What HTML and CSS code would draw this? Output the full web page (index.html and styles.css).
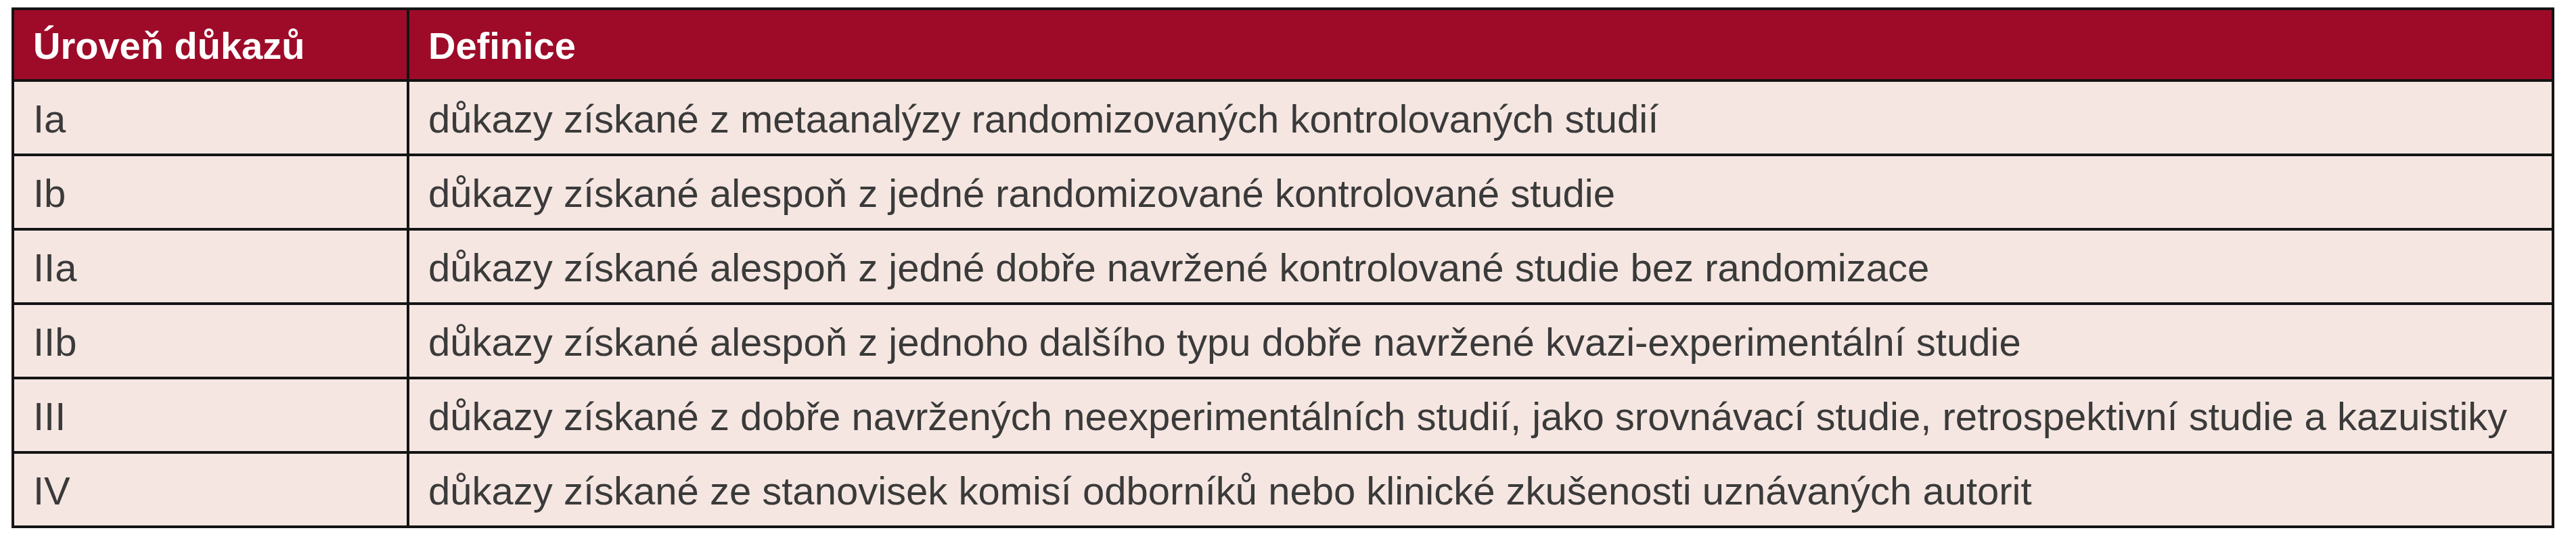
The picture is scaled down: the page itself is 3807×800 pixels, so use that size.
FILE: index.html
```html
<!DOCTYPE html>
<html lang="cs">
<head>
<meta charset="utf-8">
<title>Úroveň důkazů</title>
<link rel="stylesheet" href="styles.css">
</head>
<body>
<table class="evidence">
  <colgroup>
    <col class="col-level">
    <col class="col-def">
  </colgroup>
  <thead>
    <tr><th>Úroveň důkazů</th><th>Definice</th></tr>
  </thead>
  <tbody>
    <tr><td>Ia</td><td>důkazy získané z metaanalýzy randomizovaných kontrolovaných studií</td></tr>
    <tr><td>Ib</td><td>důkazy získané alespoň z jedné randomizované kontrolované studie</td></tr>
    <tr><td>IIa</td><td>důkazy získané alespoň z jedné dobře navržené kontrolované studie bez randomizace</td></tr>
    <tr><td>IIb</td><td>důkazy získané alespoň z jednoho dalšího typu dobře navržené kvazi-experimentální studie</td></tr>
    <tr><td>III</td><td>důkazy získané z dobře navržených neexperimentálních studií, jako srovnávací studie, retrospektivní studie a kazuistiky</td></tr>
    <tr><td>IV</td><td>důkazy získané ze stanovisek komisí odborníků nebo klinické zkušenosti uznávaných autorit</td></tr>
  </tbody>
</table>
</body>
</html>
```

FILE: styles.css
```css
html, body {
  background: #ffffff;
}
body {
  margin: 0;
  padding: 11px 0 0 17px;
  font-family: "Liberation Sans", Arial, sans-serif;
}
.evidence {
  border-collapse: collapse;
  table-layout: fixed;
  width: 3758px;
}
.col-level {
  width: 584px;
}
.evidence th,
.evidence td {
  border: 4px solid #141414;
  text-align: left;
  vertical-align: middle;
  padding: 4px 0 0 28px;
  font-size: 58px;
  line-height: 1.15;
  white-space: nowrap;
}
.evidence th {
  background: #9d0b28;
  color: #ffffff;
  font-weight: 700;
  font-size: 56px;
  height: 98px;
}
.evidence td {
  background: #f5e6e1;
  color: #3a3a3a;
  font-weight: 400;
  height: 102px;
}
```
